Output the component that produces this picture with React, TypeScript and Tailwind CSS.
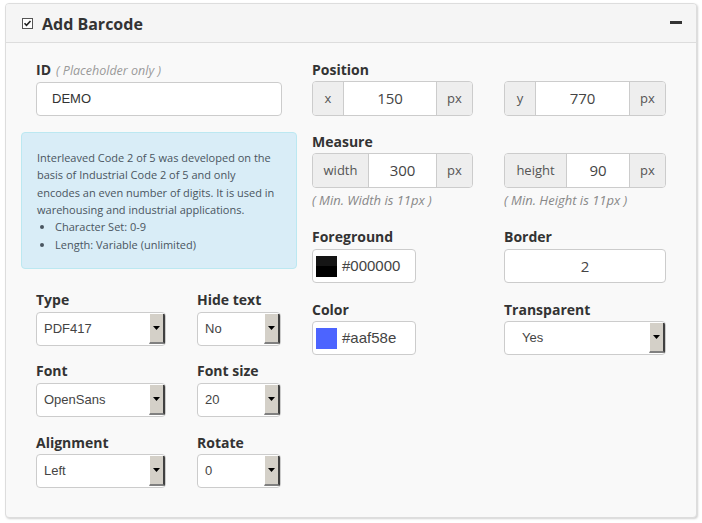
import type { ReactNode } from "react";

const sans = "font-['Open_Sans',sans-serif]";
const arial = "font-['Liberation_Sans',Arial,sans-serif]";

const Label = ({ children }: { children: ReactNode }) => (
  <div className={`h-[20px] text-[14px] leading-[20px] font-bold text-[#333] ${sans}`}>{children}</div>
);

const Arrow = () => (
  <div className="w-[16px] self-stretch bg-[#d4d0c8] border-l border-l-white border-r-2 border-r-[#404040] border-b-2 border-b-[#808080] flex items-center justify-center">
    <svg width="7" height="4" viewBox="0 0 7 4">
      <path d="M0 0 L7 0 L3.5 4 Z" fill="#000" />
    </svg>
  </div>
);

const Select = ({ value, indent = "pl-[7px]" }: { value: string; indent?: string }) => (
  <div className="h-[34px] flex items-stretch bg-white border border-[#ccc] rounded-[4px] overflow-hidden">
    <div className={`flex-1 flex items-center ${indent} text-[13px] text-[#444] ${arial}`}>{value}</div>
    <div className="py-px flex">
      <Arrow />
    </div>
  </div>
);

const Group = ({ pre, value, preW, inputW }: { pre: string; value: string; preW: string; inputW: string }) => (
  <div className={`h-[35px] flex border border-[#ccc] rounded-[4px] overflow-hidden text-[13px] text-[#555] ${sans}`}>
    <div className={`${preW} bg-[#eee] border-r border-[#ccc] flex items-center justify-center`}>{pre}</div>
    <div className={`${inputW} bg-white flex items-center justify-center text-[15px] text-[#444]`}>{value}</div>
    <div className="flex-1 bg-[#eee] border-l border-[#ccc] flex items-center justify-center">px</div>
  </div>
);

const ColorInput = ({ swatch, value }: { swatch: string; value: string }) => (
  <div className="w-[104px] h-[34px] flex items-center bg-white border border-[#ccc] rounded-[4px] pl-[3px]">
    <div className={`w-[21px] h-[21px] ${swatch}`} />
    <span className={`ml-[5px] text-[15px] text-[#444] ${arial}`}>{value}</span>
  </div>
);

const Hint = ({ children }: { children: ReactNode }) => (
  <div className={`mt-[4px] h-[16px] text-[13px] leading-[16px] italic text-[#888] ${sans}`}>{children}</div>
);

export default function App() {
  return (
    <div className="w-[702px] h-[523px] bg-white pt-[3px] pl-[5px]">
      <div className="w-[692px] h-[515px] border border-[#ddd] rounded-[4px] bg-[#f9f9f9] shadow-[1px_1px_2px_rgba(0,0,0,0.18)] overflow-hidden">
        <div className="h-[39px] bg-[#f5f5f5] border-b border-[#ddd] flex items-center pl-[16px] pr-[14px]">
          <svg width="11" height="11" viewBox="0 0 11 11">
            <rect x="0.5" y="0.5" width="10" height="10" fill="#fff" stroke="#555" />
            <path d="M2.5 5.2 L4.5 7.3 L8.5 3" fill="none" stroke="#222" strokeWidth="1.6" />
          </svg>
          <span className={`ml-[9px] mt-px text-[16px] font-bold text-[#333] ${sans}`}>Add Barcode</span>
          <div className="flex-1" />
          <div className="w-[12px] h-[3px] bg-[#333] mt-[-2px]" />
        </div>

        <div className="flex pl-[15px] pt-[17px]">
          <div className="w-[276px]">
            <div className="px-[15px]">
              <div className="flex items-baseline">
                <Label>ID</Label>
                <span className={`ml-[5px] text-[12.5px] italic text-[#999] ${sans}`}>( Placeholder only )</span>
              </div>
              <div className={`mt-px h-[34px] w-[246px] bg-white border border-[#ccc] rounded-[4px] flex items-center pl-[15px] text-[13px] text-[#333] ${arial}`}>
                DEMO
              </div>
            </div>

            <div className={`mt-[16px] h-[137px] bg-[#d9edf7] border border-[#bce8f1] rounded-[4px] pl-[15px] pr-[20px] pt-[16px] text-[11px] leading-[17.4px] text-[#4a5560] ${sans}`}>
              <p>
                Interleaved Code 2 of 5 was developed on the basis of Industrial Code 2 of 5 and only encodes an even
                number of digits. It is used in warehousing and industrial applications.
              </p>
              <ul className="list-disc ml-[18px]">
                <li>Character Set: 0-9</li>
                <li>Length: Variable (unlimited)</li>
              </ul>
            </div>

            <div className="px-[15px] pt-[21px] grid grid-cols-[130px_84px] gap-x-[31px]">
              <div>
                <Label>Type</Label>
                <div className="mt-[2px]"><Select value="PDF417" /></div>
              </div>
              <div>
                <Label>Hide text</Label>
                <div className="mt-[2px]"><Select value="No" /></div>
              </div>
              <div className="mt-[15px]">
                <Label>Font</Label>
                <div className="mt-[2px]"><Select value="OpenSans" /></div>
              </div>
              <div className="mt-[15px]">
                <Label>Font size</Label>
                <div className="mt-[2px]"><Select value="20" /></div>
              </div>
              <div className="mt-[16px]">
                <Label>Alignment</Label>
                <div className="mt-[1px]"><Select value="Left" /></div>
              </div>
              <div className="mt-[16px]">
                <Label>Rotate</Label>
                <div className="mt-[1px]"><Select value="0" /></div>
              </div>
            </div>
          </div>

          <div className="ml-[15px] w-[354px] grid grid-cols-[161px_162px] gap-x-[31px] content-start">
            <div className="col-span-2">
              <Label>Position</Label>
            </div>
            <div className="mt-px">
              <Group pre="x" value="150" preW="w-[31px]" inputW="w-[92px]" />
            </div>
            <div className="mt-px">
              <Group pre="y" value="770" preW="w-[31px]" inputW="w-[93px]" />
            </div>

            <div className="col-span-2 mt-[16px]">
              <Label>Measure</Label>
            </div>
            <div className="mt-px">
              <Group pre="width" value="300" preW="w-[56px]" inputW="w-[67px]" />
              <Hint>( Min. Width is 11px )</Hint>
            </div>
            <div className="mt-px">
              <Group pre="height" value="90" preW="w-[62px]" inputW="w-[62px]" />
              <Hint>( Min. Height is 11px )</Hint>
            </div>

            <div className="mt-[19px]">
              <Label>Foreground</Label>
              <div className="mt-[2px]">
                <ColorInput swatch="bg-[linear-gradient(#151515_0%,#151515_50%,#000_50%)]" value="#000000" />
              </div>
            </div>
            <div className="mt-[19px]">
              <Label>Border</Label>
              <div className={`mt-[2px] h-[34px] bg-white border border-[#ccc] rounded-[4px] flex items-center justify-center text-[15px] text-[#444] ${sans}`}>
                2
              </div>
            </div>

            <div className="mt-[17px]">
              <Label>Color</Label>
              <div className="mt-[1px]">
                <ColorInput swatch="bg-[#4c64ff]" value="#aaf58e" />
              </div>
            </div>
            <div className="mt-[17px]">
              <Label>Transparent</Label>
              <div className="mt-[1px]"><Select value="Yes" indent="pl-[17px]" /></div>
            </div>
          </div>
        </div>
      </div>
    </div>
  );
}
